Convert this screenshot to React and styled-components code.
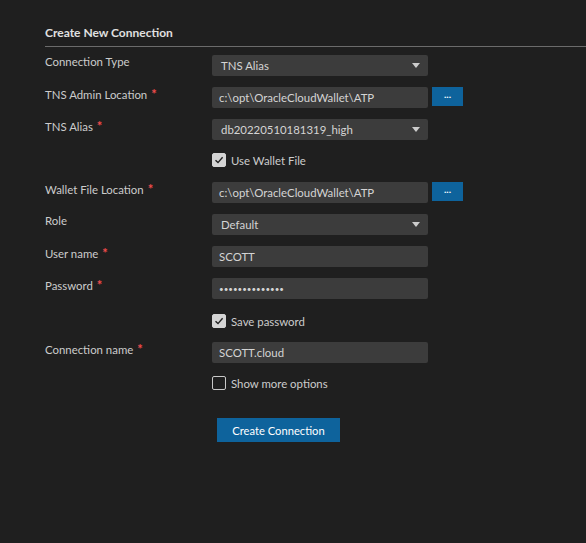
import React from 'react'
import styled, { createGlobalStyle } from 'styled-components'

const GlobalStyle = createGlobalStyle`
  html, body {
    margin: 0;
    padding: 0;
    background: #1f1f1f;
  }
  body {
    font-family: Lato, "Liberation Sans", sans-serif;
    color: #cccccc;
  }
`

const Page = styled.div`
  width: 586px;
  height: 543px;
  background: #1f1f1f;
  padding: 25px 0 0 45px;
  box-sizing: border-box;
  overflow: hidden;
`

const Heading = styled.div`
  font-size: 12px;
  font-weight: 700;
  color: #e0e0e0;
  line-height: 16px;
  padding-bottom: 5px;
  border-bottom: 1px solid #6b6b6b;
  margin-bottom: 8px;
`

const Form = styled.div`
  display: flex;
  flex-direction: column;
`

const FieldRow = styled.div`
  display: grid;
  grid-template-columns: 167px 216px auto;
  align-items: start;
  margin-bottom: 11px;
`

const Label = styled.div`
  font-size: 11.4px;
  color: #cccccc;
  line-height: 16px;
  margin-top: -1px;
`

const Star = styled.span`
  color: #f14c4c;
  margin-left: 4px;
  font-size: 13px;
  font-weight: 700;
`

const InputBox = styled.div`
  height: 21px;
  background: #3c3c3c;
  border-radius: 2px;
  display: flex;
  align-items: center;
  justify-content: space-between;
  padding: 0 8px 0 ${p => (p.$select ? 9 : 7)}px;
  box-sizing: border-box;
  font-size: ${p => (p.$dots ? '8px' : '11.4px')};
  color: #d4d4d4;
  white-space: nowrap;
`

const Caret = styled.span`
  width: 0;
  height: 0;
  border-left: 4px solid transparent;
  border-right: 4px solid transparent;
  border-top: 5px solid #cccccc;
`

const BrowseButton = styled.button`
  margin-left: 4px;
  width: 31px;
  height: 19px;
  border: none;
  border-radius: 0;
  background: #0e639c;
  color: #ffffff;
  font-size: 10px;
  font-weight: 700;
  padding: 0 0 6px;
  line-height: 10px;
  font-family: inherit;
`

const CheckRow = styled.label`
  display: flex;
  align-items: center;
  margin: ${p => p.$top}px 0 ${p => p.$bottom}px 167px;
  height: 14px;
  font-size: 11.4px;
  color: #cccccc;
`

const Box = styled.span`
  width: 14px;
  height: 14px;
  box-sizing: border-box;
  border-radius: 2px;
  margin-right: 5px;
  display: flex;
  align-items: center;
  justify-content: center;
  background: ${p => (p.$checked ? '#d4d4d4' : 'transparent')};
  border: 1px solid ${p => (p.$checked ? '#d4d4d4' : '#c8c8c8')};
`

const SubmitRow = styled.div`
  margin: 28px 0 0 172px;
`

const SubmitButton = styled.button`
  width: 123px;
  height: 24px;
  border: none;
  background: #0e639c;
  color: #ffffff;
  font-family: inherit;
  font-size: 11.2px;
  padding: 0;
`

const Check = () => (
  <svg width="10" height="10" viewBox="0 0 10 10">
    <path d="M1.5 5.2 L4 7.6 L8.6 2.2" fill="none" stroke="#1f1f1f" strokeWidth="1.4" />
  </svg>
)

const Field = ({ label, required, value, select, browse, dots }) => (
  <FieldRow>
    <Label>
      {label}
      {required && <Star>*</Star>}
    </Label>
    <InputBox $select={select} $dots={dots}>
      <span>{value}</span>
      {select && <Caret />}
    </InputBox>
    {browse && <BrowseButton>...</BrowseButton>}
  </FieldRow>
)

const CheckOption = ({ checked, text, top, bottom }) => (
  <CheckRow $top={top} $bottom={bottom}>
    <Box $checked={checked}>{checked && <Check />}</Box>
    {text}
  </CheckRow>
)

export default function App() {
  return (
    <>
      <GlobalStyle />
      <Page>
        <Heading>Create New Connection</Heading>
        <Form>
          <Field label="Connection Type" value="TNS Alias" select />
          <Field label="TNS Admin Location" required value="c:\opt\OracleCloudWallet\ATP" browse />
          <Field label="TNS Alias" required value="db20220510181319_high" select />
          <CheckOption checked text="Use Wallet File" top={2} bottom={15} />
          <Field label="Wallet File Location" required value="c:\opt\OracleCloudWallet\ATP" browse />
          <Field label="Role" value="Default" select />
          <Field label="User name" required value="SCOTT" />
          <Field label="Password" required value={'\u2022'.repeat(14)} dots />
          <CheckOption checked text="Save password" top={4} bottom={14} />
          <Field label="Connection name" required value="SCOTT.cloud" />
          <CheckOption text="Show more options" top={2} bottom={0} />
          <SubmitRow>
            <SubmitButton>Create Connection</SubmitButton>
          </SubmitRow>
        </Form>
      </Page>
    </>
  )
}
